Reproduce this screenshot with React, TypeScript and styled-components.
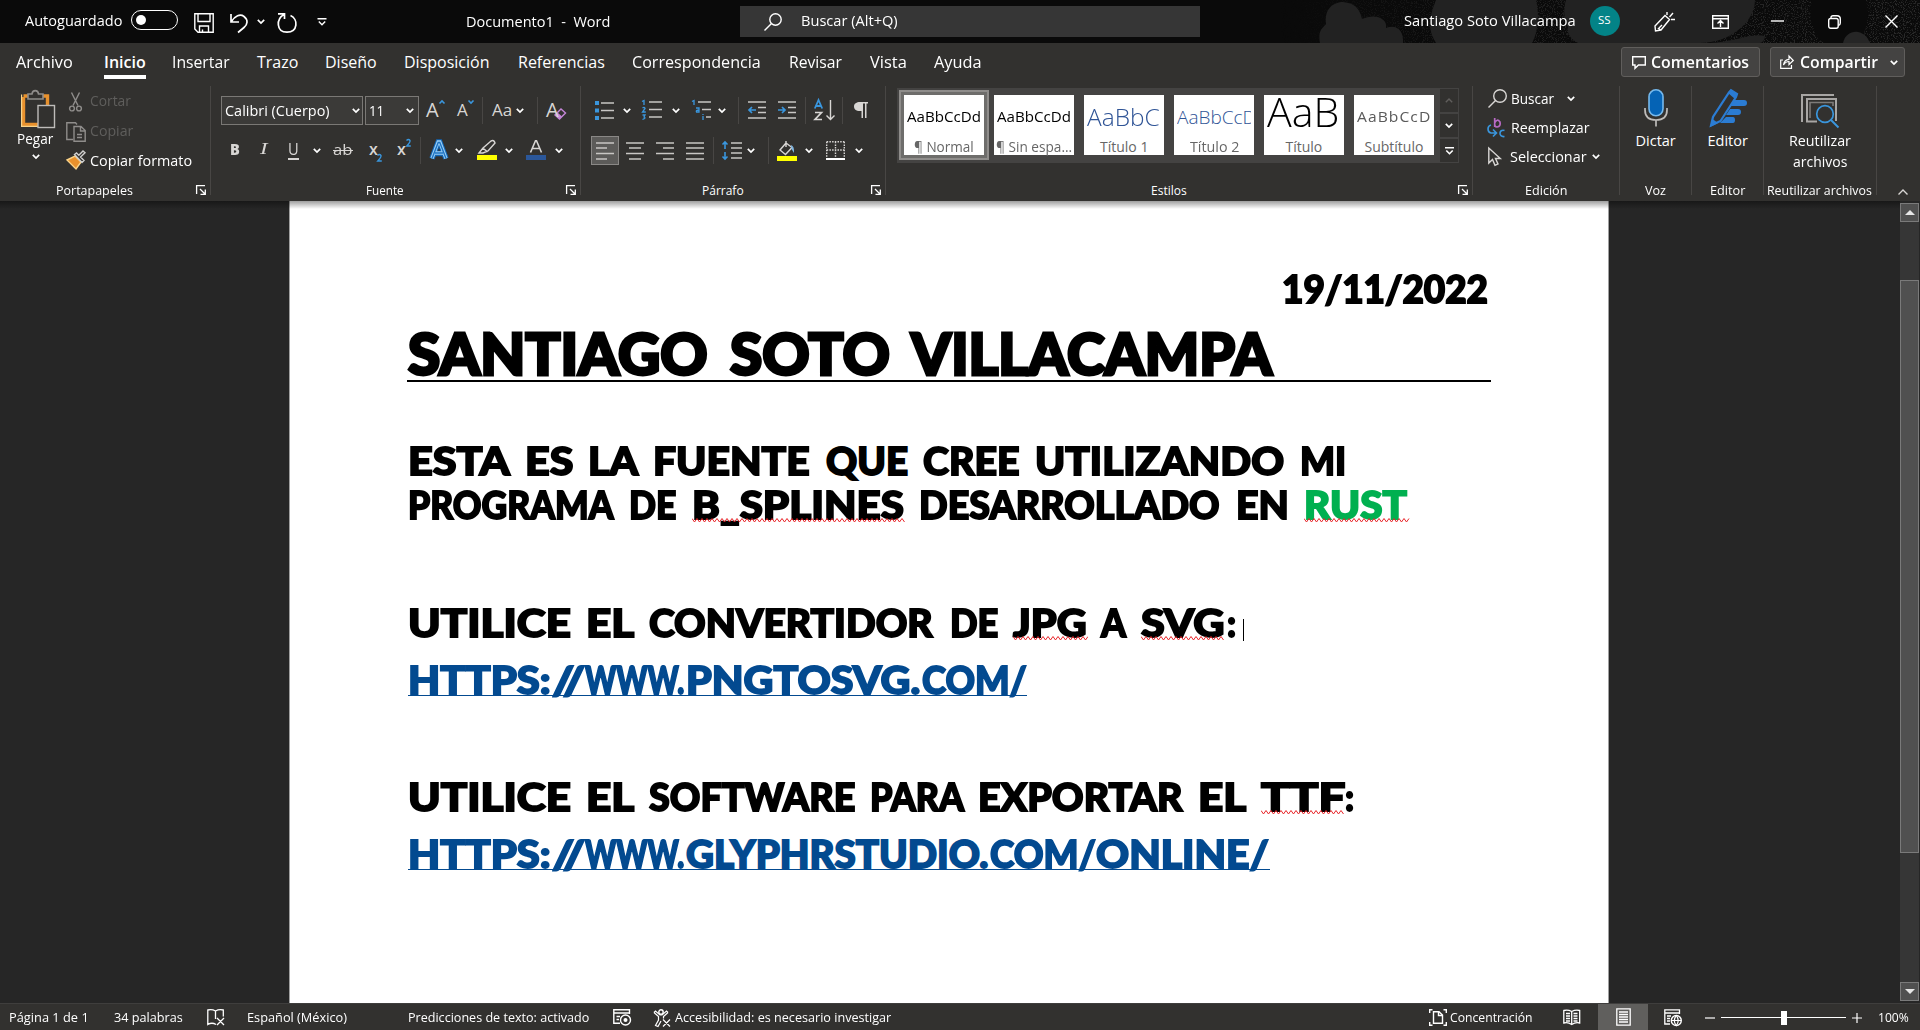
import React, { useLayoutEffect, useRef } from "react";
import styled, { createGlobalStyle, css } from "styled-components";

const GlobalStyle = createGlobalStyle`
  * { box-sizing: border-box; }
  html, body, #root { margin: 0; padding: 0; }
  body {
    background: #262626;
    color: #fff;
    font-family: "Open Sans", "Noto Sans", sans-serif;
    overflow: hidden;
  }
`;

/* ---------- shared parts ---------- */

const FitBox = styled.span<{ $w: number; $gap: number }>`
  display: block;
  flex: none;
  position: relative;
  width: ${(p) => p.$w}px;
  margin-left: ${(p) => p.$gap}px;
  white-space: nowrap;
`;

const FitText = styled.span<{ $size: number; $weight: number; $color: string; $family?: string; $lh?: number; $track?: number; $stroke?: number }>`
  display: inline-block;
  vertical-align: top;
  transform-origin: 0 50%;
  font-size: ${(p) => p.$size}px;
  font-weight: ${(p) => p.$weight};
  line-height: ${(p) => p.$lh ?? 20}px;
  letter-spacing: ${(p) => p.$track ?? 0}px;
  color: ${(p) => p.$color};
  ${(p) => p.$family && css`font-family: ${p.$family};`}
  ${(p) => p.$stroke && css`-webkit-text-stroke: ${p.$stroke}px ${p.$color};`}
`;

type TextProps = {
  w: number; gap?: number; size?: number; weight?: number; color?: string; stroke?: number;
  family?: string; lh?: number; track?: number; over?: React.ReactNode; children: React.ReactNode;
};

/* A run of text stretched or condensed to a fixed width. */
function Text({ w, gap = 0, size = 14, weight = 400, color = "#fff", stroke, family, lh, track, over, children }: TextProps) {
  const ref = useRef<HTMLSpanElement>(null);
  useLayoutEffect(() => {
    const el = ref.current;
    if (el && el.offsetWidth) el.style.transform = `scaleX(${w / el.offsetWidth})`;
  }, [w, children]);
  return (
    <FitBox $w={w} $gap={gap}>
      <FitText ref={ref} $size={size} $weight={weight} $color={color} $family={family} $lh={lh} $track={track} $stroke={stroke}>
        {children}
      </FitText>
      {over}
    </FitBox>
  );
}

const Svg = styled.svg<{ $gap?: number; $dy?: number }>`
  display: block;
  flex: none;
  margin-left: ${(p) => p.$gap ?? 0}px;
  margin-top: ${(p) => p.$dy ?? 0}px;
  overflow: visible;
  fill: none;
  stroke: #d0cfce;
  stroke-width: 1.4;
`;

type IconProps = { w: number; h: number; gap?: number; dy?: number; children: React.ReactNode };
const Icon = ({ w, h, gap, dy, children }: IconProps) => (
  <Svg width={w} height={h} viewBox={`0 0 ${w} ${h}`} $gap={gap} $dy={dy}>{children}</Svg>
);

const Chevron = ({ gap = 0, color = "#fff", dy }: { gap?: number; color?: string; dy?: number }) => (
  <Icon w={8} h={5} gap={gap} dy={dy}><path d="M.8 .8 4 4 7.2 .8" stroke={color} strokeWidth={1.7} /></Icon>
);

const Divider = styled.i<{ $gap: number; $h?: number }>`
  flex: none;
  width: 1px;
  height: ${(p) => p.$h ?? 27}px;
  margin-left: ${(p) => p.$gap}px;
  background: #484644;
`;

const Row = styled.div<{ $h: number; $mt?: number; $pl?: number }>`
  display: flex;
  align-items: center;
  height: ${(p) => p.$h}px;
  margin-top: ${(p) => p.$mt ?? 0}px;
  padding-left: ${(p) => p.$pl ?? 0}px;
`;

/* ---------- title bar ---------- */

const Window = styled.div`
  display: flex;
  flex-direction: column;
  width: 1920px;
  height: 1030px;
`;

const TitleBar = styled.header`
  position: relative;
  display: flex;
  flex: none;
  align-items: center;
  height: 43px;
  background: #0a0a0a;
  overflow: hidden;
  > * { position: relative; }
`;

const Backdrop = styled.svg`
  && { position: absolute; }
  right: 0;
  top: 0;
`;

const Toggle = styled.span`
  display: flex;
  flex: none;
  align-items: center;
  width: 47px;
  height: 20px;
  margin: -3px 0 0 8px;
  padding-left: 4px;
  border: 1.5px solid #fff;
  border-radius: 10px;
  &::before { content: ""; width: 10px; height: 10px; border-radius: 50%; background: #fff; }
`;

const SearchBox = styled.div`
  display: flex;
  flex: none;
  align-items: center;
  width: 460px;
  height: 31px;
  margin-left: 130px;
  padding-left: 24px;
  background: #363636;
`;

const Avatar = styled.div`
  display: flex;
  flex: none;
  align-items: center;
  justify-content: center;
  width: 30px;
  height: 30px;
  margin: -1px 0 0 14px;
  border-radius: 50%;
  background: #038387;
`;

function Title() {
  return (
    <TitleBar>
      <Backdrop width="640" height="43" viewBox="1280 0 640 43">
        <defs>
          <filter id="grain"><feTurbulence type="fractalNoise" baseFrequency="0.9" numOctaves="2" /><feColorMatrix values="0 0 0 0 .17  0 0 0 0 .17  0 0 0 0 .17  0 0 0 7 -3.6" /></filter>
          <linearGradient id="fade" x1="0" x2="1"><stop offset="0" stopColor="#000" /><stop offset=".35" stopColor="#666" /><stop offset="1" stopColor="#999" /></linearGradient>
          <mask id="m"><rect x="1280" width="640" height="43" fill="url(#fade)" /></mask>
        </defs>
        <g mask="url(#m)"><rect x="1280" width="640" height="43" filter="url(#grain)" opacity=".5" /></g>
        <g fill="#222">
          <path d="M1320 43C1318 30 1322 29 1326 24 1324 8 1334 2 1343 2 1356 3 1360 10 1362 19 1374 13 1388 18 1386 28 1397 24 1404 31 1403 43Z" />
          <path d="M1436 43C1428 30 1428 20 1436 0H1536C1539 12 1539 30 1532 43Z" />
          <path d="M1566 0C1563 10 1564 18 1568 27 1566 34 1572 40 1578 43H1700C1730 43 1755 22 1755 0Z" />
          <path d="M1702 43C1730 44 1752 32 1765 36 1765 40 1762 43 1760 43Z" />
        </g>
        <path d="M1812 0C1808 14 1812 34 1824 43H1858C1868 30 1870 14 1866 0Z" fill="#0a0a0a" />
        <path d="M1843 43C1845 34 1852 31 1858 32 1864 33 1868 38 1870 43Z" fill="#262626" />
      </Backdrop>
      <Text w={97.5} gap={25} lh={20}>Autoguardado</Text>
      <Toggle />
      <Icon w={20} h={20} gap={16} dy={3}><path d="M.8.8H19.2V19.2H4L.8 16ZM4 1V8.500H16V1M5.500 19V13H14.500V19M8.500 16.500V19" stroke="#fff" /></Icon>
      <Icon w={18} h={20} gap={16} dy={3}><path d="M1 1V9H9M1.500 8.500C5 3 10 .5 14 3.500 18.500 7 17.500 11.500 14 14.500L8 19.500" stroke="#fff" strokeWidth="1.7" /></Icon>
      <Chevron gap={9} />
      <Icon w={20} h={20} gap={12} dy={3}><path d="M1 .8H7.500V6M7 1.500C-1 6-1 19 10 19.200 21 19 21.500 6 13.500 2.500" stroke="#fff" strokeWidth="1.7" /></Icon>
      <Icon w={10} h={8} gap={20}><path d="M.5 .7H9.500M1.800 3.500 5 6.800 8.200 3.500" stroke="#fff" /></Icon>
      <Text w={144} gap={139.5} lh={24}>Documento1&nbsp; -&nbsp; Word</Text>
      <SearchBox>
        <Icon w={18} h={18}><circle cx="11.500" cy="6.500" r="5.700" stroke="#fff" /><path d="M7.500 10.500.500 17.500" stroke="#fff" /></Icon>
        <Text w={97} gap={19}>Buscar (Alt+Q)</Text>
      </SearchBox>
      <Text w={172} gap={203.500}>Santiago Soto Villacampa</Text>
      <Avatar><Text w={13} size={11.5}>SS</Text></Avatar>
      <Icon w={21} h={20} gap={34}><path d="M1 14 11 3.500 15.500 7.500 7 18 1.500 19ZM8 13 4.500 16.500 7 18M13 3V0M15.500 5 19 1M17 7.500H21" stroke="#fff" /></Icon>
      <Icon w={17} h={14} gap={37}><path d="M.7.7H16.300V13.300H.7ZM.7 3.700H16.300M8.500 12V6M5.500 8.500 8.500 5.500 11.500 8.500" stroke="#fff" /></Icon>
      <Icon w={13} h={2} gap={42} dy={-1}><path d="M0 1H13" stroke="#fff" /></Icon>
      <Icon w={13} h={14} gap={44}><rect x=".7" y="3.500" width="9.500" height="9.800" rx="2" stroke="#fff" /><path d="M3 3.500V2.500Q3 .7 5 .7H9Q12.300.7 12.300 4V8Q12.300 10 10.300 10.500" stroke="#fff" /></Icon>
      <Icon w={13} h={13} gap={44}><path d="M.5.5 12.500 12.500M12.500.5.5 12.500" stroke="#fff" /></Icon>
    </TitleBar>
  );
}

/* ---------- tabs ---------- */

const TabBar = styled.nav`
  display: flex;
  flex: none;
  height: 37px;
  background: #32312f;
`;

const Tab = styled.div<{ $gap: number; $active?: boolean }>`
  flex: none;
  height: 36px;
  margin-left: ${(p) => p.$gap}px;
  padding-top: 7px;
  border-bottom: 4px solid ${(p) => (p.$active ? "#fff" : "transparent")};
`;

const HeadButton = styled.button<{ $w: number; $gap: number; $pl: number }>`
  display: flex;
  flex: none;
  align-items: center;
  width: ${(p) => p.$w}px;
  height: 30px;
  margin: 4px 0 0 ${(p) => p.$gap}px;
  padding: 0 0 0 ${(p) => p.$pl}px;
  border: 1px solid #605e5c;
  border-radius: 3px;
  background: #444342;
  font: inherit;
`;

const tabs: [string, number, number][] = [
  ["Archivo", 16, 57], ["Inicio", 31, 42], ["Insertar", 26, 58], ["Trazo", 27, 41], ["Diseño", 27, 52],
  ["Disposición", 27, 86], ["Referencias", 28, 87], ["Correspondencia", 27, 129], ["Revisar", 28, 53],
  ["Vista", 28, 37], ["Ayuda", 27, 48],
];

function Tabs() {
  return (
    <TabBar>
      {tabs.map(([name, gap, w]) => (
        <Tab key={name} $gap={gap} $active={name === "Inicio"}>
          <Text w={w} size={16} lh={24} weight={name === "Inicio" ? 600 : 400}>{name}</Text>
        </Tab>
      ))}
      <HeadButton $w={139} $gap={639} $pl={10}>
        <Icon w={14} h={13}><path d="M.7.7H13.300V9H6.500L3 12.300V9H.7Z" stroke="#fff" /></Icon>
        <Text w={98} gap={5} size={16} lh={22} weight={600}>Comentarios</Text>
      </HeadButton>
      <HeadButton $w={135} $gap={10} $pl={9}>
        <Icon w={14} h={14}><path d="M3 5H.7V13.300H11.500V10M3.500 10C4 6 6 4.500 9 4.300V1L13.300 5.500 9 9.500V6.500C7 6.500 5 7.500 3.500 10Z" stroke="#fff" strokeWidth="1.200" /></Icon>
        <Text w={78} gap={6} size={16} lh={22} weight={600}>Compartir</Text>
        <Chevron gap={12} />
      </HeadButton>
    </TabBar>
  );
}

/* ---------- ribbon ---------- */

const RibbonBar = styled.section`
  display: flex;
  flex: none;
  height: 121px;
  padding: 6px 0;
  background: #32312f;
`;

const Group = styled.div<{ $w: number }>`
  display: flex;
  flex: none;
  flex-direction: column;
  width: ${(p) => p.$w}px;
  border-right: 1px solid #484644;
`;

const GroupBody = styled.div`
  flex: none;
  height: 99px;
`;

const GroupFoot = styled.div`
  display: flex;
  align-items: center;
  height: 10px;
`;

const LauncherBox = styled.span`
  margin-left: auto;
  margin-right: 4px;
`;

const FootLabel = styled.div`
  margin-top: 3px;
`;

const Columns = styled.div`
  display: flex;
`;

const BigButton = styled.div<{ $pt: number }>`
  display: flex;
  flex: 1;
  flex-direction: column;
  align-items: center;
  padding-top: ${(p) => p.$pt}px;
`;

const PasteButton = styled.div`
  display: flex;
  flex-direction: column;
  align-items: center;
  width: 37px;
  margin-left: 17px;
  padding-top: 4px;
`;

const Field = styled.div<{ $w: number; $gap?: number }>`
  display: flex;
  flex: none;
  align-items: center;
  width: ${(p) => p.$w}px;
  height: 29px;
  margin-left: ${(p) => p.$gap ?? 0}px;
  padding-left: 3px;
  border: 1px solid #7a7875;
  background: #3b3a38;
`;

const Pressed = styled.div`
  display: flex;
  flex: none;
  align-items: center;
  width: 28px;
  height: 29px;
  padding-left: 4px;
  border: 1px solid #8a8886;
  background: #5c5b59;
`;

const Launcher = () => (
  <LauncherBox>
    <Icon w={10} h={10}><path d="M.6 9V.6H9M4 4 8.500 8.500M9.300 4.500V9.300H4.500" stroke="#fff" strokeWidth="1.300" /></Icon>
  </LauncherBox>
);

function Foot({ w, gap, launcher, children }: { w: number; gap: number; launcher?: boolean; children: string }) {
  return (
    <GroupFoot>
      <FootLabel><Text w={w} gap={gap} size={12}>{children}</Text></FootLabel>
      {launcher && <Launcher />}
    </GroupFoot>
  );
}

const blue = "#3a96dd";

function Clipboard() {
  return (
    <Group $w={211}>
      <GroupBody>
        <Columns>
          <PasteButton>
            <Icon w={34} h={38} gap={4}>
              <path d="M2.500 7V34.500H17M26.500 15V6H20M2.500 6H8" stroke="#e8912d" strokeWidth="3.400" />
              <path d="M.6 4.500V36.400H17" stroke="#fad48a" strokeWidth="1.200" />
              <path d="M7 9V4H11C11.500-.5 17-.5 17.500 4H22V9Z" stroke="#8f8d8b" strokeWidth="1.600" fill="#32312f" />
              <rect x="17" y="15.500" width="16.500" height="22" stroke="#bebcba" fill="#32312f" />
            </Icon>
            <Text w={36.500} lh={22} size={14.500}>Pegar</Text>
            <Chevron dy={4} />
          </PasteButton>
          <div>
            <Row $h={30} $pl={15} $mt={1}>
              <Icon w={13} h={20} dy={-1}><path d="M2.500.5 9 13.500M10.500.5 4 13.500" stroke="#8f8d8b" /><circle cx="3" cy="16.500" r="2.400" stroke="#8f8d8b" /><circle cx="10" cy="16.500" r="2.400" stroke="#8f8d8b" /></Icon>
              <Text w={41} gap={8} size={14.5} color="#5f5e5c">Cortar</Text>
            </Row>
            <Row $h={30} $pl={12}>
              <Icon w={20} h={20} dy={-1}><path d="M7 17.500H.8V.8H9.500L11 2.500M8 4.500H15L19.200 8.500V19.200H8ZM14.500 4.500V9H19M11 12.500H16M11 15.500H16" stroke="#8f8d8b" /></Icon>
              <Text w={43} gap={4} size={14.5} color="#5f5e5c">Copiar</Text>
            </Row>
            <Row $h={30} $pl={12}>
              <Icon w={20} h={19} dy={-4}>
                <path d="M1 9 9 5 15 11 10 18Z" fill="#e8912d" stroke="#fad48a" />
                <path d="M8.500 3.500 16 11.500 18 9.500 14.500 6 19 1.800 17 0 12.800 4.200 10.500 2Z" stroke="#d0cfce" fill="#32312f" />
              </Icon>
              <Text w={102} gap={4} size={14.5}>Copiar formato</Text>
            </Row>
          </div>
        </Columns>
      </GroupBody>
      <Foot w={77} gap={56} launcher>Portapapeles</Foot>
    </Group>
  );
}

const g = "#d8d6d4";

function FontGroup() {
  return (
    <Group $w={370}>
      <GroupBody>
        <Row $h={28} $mt={10} $pl={10}>
          <Field $w={142}><Text w={105} size={15} lh={22}>Calibri (Cuerpo)</Text><Chevron gap={22} /></Field>
          <Field $w={54} $gap={2}><Text w={15} size={15} lh={22}>11</Text><Chevron gap={22} /></Field>
          <Text w={13} gap={7} size={20} color={g} lh={24}>A</Text>
          <Icon w={6} h={4} gap={0} dy={-16}><path d="M.5 3.500 3 1 5.500 3.500" stroke={blue} strokeWidth="1.600" /></Icon>
          <Text w={11} gap={12} size={17} color={g} lh={26}>A</Text>
          <Icon w={6} h={4} gap={0} dy={-16}><path d="M.5.5 3 3 5.500.5" stroke={blue} strokeWidth="1.600" /></Icon>
          <Divider $gap={8} />
          <Text w={20} gap={9} size={17} color={g} lh={22}>Aa</Text>
          <Chevron gap={4} />
          <Divider $gap={13} />
          <Text w={13} gap={8} size={20} color={g} lh={24}>A</Text>
          <Icon w={12} h={12} gap={-5} dy={8}><path d="M1 7 7 1 11.500 5 5.500 11Z" stroke="#c586d8" fill="#32312f" /><path d="M1 7 3.500 4.500 8 8.500 5.500 11Z" fill="#c586d8" stroke="none" /></Icon>
        </Row>
        <Row $h={28} $mt={12} $pl={19}>
          <Text w={10} size={16} weight={800} color={g}>B</Text>
          <Text w={8} gap={20} size={17} color={g} family='"Liberation Serif", serif'><i>I</i></Text>
          <Text w={11} gap={20} size={16} color={g} over={<Underbar />}>U</Text>
          <Chevron gap={14} />
          <Text w={20} gap={12} size={15} color={g} over={<Strike />}>ab</Text>
          <Text w={9} gap={16} size={16} weight={600} color={g}>x</Text>
          <Icon w={5} h={8} gap={-1} dy={16}><path d="M.5 1.500Q2.500-.5 4 1.500 4.500 3 .8 7H4.800" stroke={blue} /></Icon>
          <Text w={9} gap={15} size={16} weight={600} color={g}>x</Text>
          <Icon w={5} h={8} gap={0} dy={-14}><path d="M.5 1.500Q2.500-.5 4 1.500 4.500 3 .8 7H4.800" stroke={blue} /></Icon>
          <Divider $gap={9} />
          <Icon w={18} h={20} gap={9}>
            <path d="M2 18.500 8.200 2H9.800L16 18.500M4.500 13.500H13.500" stroke="#1267b8" strokeWidth="5.500" />
            <path d="M2 18.500 8.200 2H9.800L16 18.500M5 13H13" stroke="#9cd0f5" strokeWidth="3.400" />
            <path d="M2 18.500 8.200 2.500H9.800L16 18.500M5 13H13" stroke="#1f74c4" strokeWidth="1.400" />
          </Icon>
          <Chevron gap={7} />
          <Icon w={20} h={20} gap={14}><rect y="15" width="20" height="5" fill="#ff0" stroke="none" /><path d="M2 13 6 8 14 1Q17-.5 18 3L11 11 6 13ZM6 8 10.500 12" stroke={g} /></Icon>
          <Chevron gap={8} />
          <Icon w={20} h={20} gap={13}><rect y="15" width="20" height="5" fill="#2b579a" stroke="none" /><path d="M4.500 12.500 9.500.8H10.500L15.500 12.500M6.200 8.500H13.800" stroke={g} strokeWidth="1.600" /></Icon>
          <Chevron gap={9} />
        </Row>
      </GroupBody>
      <Foot w={38} gap={155} launcher>Fuente</Foot>
    </Group>
  );
}

const Underbar = styled.i`
  position: absolute; left: 0; right: 0; bottom: 1px; height: 2px; background: #d8d6d4;
`;
const Strike = styled.i`
  position: absolute; left: 0; right: 0; top: 11px; height: 1px; background: #d8d6d4;
`;

const L = ({ d }: { d: string }) => <path d={d} stroke="#c8c6c4" strokeWidth="1.600" />;

function Paragraph() {
  return (
    <Group $w={305}>
      <GroupBody>
        <Row $h={28} $mt={10} $pl={14}>
          <Icon w={19} h={19}><path d="M0 2H4M0 9.500H4M0 17H4" stroke={blue} strokeWidth="4" /><L d="M6 2H19M6 9.500H19M6 17H19" /></Icon>
          <Chevron gap={9} />
          <Icon w={20} h={20} gap={11}><L d="M7 2H20M7 9.500H20M7 17H20" /><path d="M0 1.500 2 .5V5M.5 8Q2.500 6.500 3 8.500L.5 12H3.800M.5 15H3L2 17Q4.500 18 .5 19.500" stroke={blue} strokeWidth="1.300" /></Icon>
          <Chevron gap={10} />
          <Icon w={19} h={20} gap={12}><L d="M6 2H19M10 9.500H19M14 17H19" /><path d="M0 1.500 2 .5V5M4 8H7V12H4.500Q3.500 10 7 10M11 14V15M11 16V20" stroke={blue} strokeWidth="1.300" /></Icon>
          <Chevron gap={7} />
          <Divider $gap={12} />
          <Icon w={18} h={18} gap={9}><L d="M0 1H18M10 6.500H18M10 11.500H18M0 17H18" /><path d="M8 9H1M4 6 1 9 4 12" stroke={blue} strokeWidth="1.700" /></Icon>
          <Icon w={18} h={18} gap={12}><L d="M0 1H18M10 6.500H18M10 11.500H18M0 17H18" /><path d="M0 9H7M4 6 7 9 4 12" stroke={blue} strokeWidth="1.700" /></Icon>
          <Divider $gap={9} />
          <Icon w={21} h={22} gap={8}><path d="M.8 9.500 4.500 1 8.200 9.500M2 7H7" stroke={blue} strokeWidth="1.800" /><path d="M1 13.500H7.500L1 20.500H8" stroke={g} strokeWidth="1.700" /><path d="M16.500 1V20M12.500 16.500 16.500 20.500 20.500 16.500" stroke={g} /></Icon>
          <Divider $gap={7} />
          <Icon w={14} h={16} gap={11}><path d="M6 0H14V1.500H12.500V16H11V1.500H9V16H7.500V9C2 9.500 0 7 0 4.500 0 1.500 2.500 0 6 0Z" fill={g} stroke="none" /></Icon>
        </Row>
        <Row $h={29} $mt={12} $pl={10}>
          <Pressed><Icon w={18} h={18}><L d="M0 1H18M0 6H11M0 11.500H18M0 17H11" /></Icon></Pressed>
          <Icon w={18} h={18} gap={7}><L d="M0 1H18M3 6H15M0 11.500H18M3 17H15" /></Icon>
          <Icon w={18} h={18} gap={12}><L d="M0 1H18M7 6H18M0 11.500H18M7 17H18" /></Icon>
          <Icon w={18} h={18} gap={12}><L d="M0 1H18M0 6H18M0 11.500H18M0 17H18" /></Icon>
          <Divider $gap={9} />
          <Icon w={20} h={20} gap={8}><L d="M9 2H20M9 7H20M9 12H20M9 17H20" /><path d="M3 1V8M.5 3.500 3 1 5.500 3.500M3 11V18M.5 15.500 3 18 5.500 15.500" stroke={blue} strokeWidth="1.600" /></Icon>
          <Chevron gap={5} />
          <Divider $gap={13} />
          <Icon w={20} h={20} gap={8}><rect y="15" width="20" height="5" fill="#ff0" stroke="none" /><path d="M9 2 3 9 8.500 13.500 15 6.500 9 2V0M9 2V6" stroke={g} /><path d="M14 4Q17.500 5 17 12L14.500 8Z" fill="#7fb5e0" stroke="none" /></Icon>
          <Chevron gap={8} />
          <Icon w={19} h={19} gap={13}><path d="M.7.7H18.300M.7.7V17M18.300.7V17M9.500.7V17M.7 9H18.300" stroke={g} strokeDasharray="1.500 1.200" /><path d="M0 18H19" stroke="#fff" strokeWidth="2" /></Icon>
          <Chevron gap={10} />
        </Row>
      </GroupBody>
      <Foot w={42} gap={121} launcher>Párrafo</Foot>
    </Group>
  );
}

/* ---------- style gallery ---------- */

const Gallery = styled.div`
  display: flex;
  width: 562px;
  height: 75px;
  margin: 2px 0 0 11px;
  padding: 2px 1px 1px 2px;
  background: #444342;
`;

const StyleCell = styled.div<{ $on?: boolean }>`
  flex: none;
  width: 90px;
  height: 70px;
  padding: 3px;
  border: 2px solid ${(p) => (p.$on ? "#8f8d8b" : "transparent")};
  background: ${(p) => (p.$on ? "#6e6d6b" : "transparent")};
`;

const Thumb = styled.div`
  display: flex;
  flex-direction: column;
  width: 80px;
  height: 60px;
  background: #fff;
`;

const Sample = styled.div<{ $up?: number }>`
  display: flex;
  flex: none;
  align-items: center;
  height: 37px;
  margin: 3px 3px 0;
  padding-bottom: ${(p) => p.$up ?? 0}px;
  overflow: hidden;
`;

const ThumbName = styled.div`
  display: flex;
  justify-content: center;
  margin-top: 2px;
`;

const Scroller = styled.div`
  display: flex;
  flex-direction: column;
  justify-content: space-between;
  width: 18px;
  height: 73px;
  margin: -1px 0 0 auto;
`;

const ScrollKey = styled.div`
  display: flex;
  align-items: center;
  justify-content: center;
  height: 23px;
  background: #32312f;
`;

type StyleDef = { name: string; nw: number; s: string; sw: number; size: number; color: string; light?: boolean; up?: number; track?: number };
const styleDefs: StyleDef[] = [
  { name: "¶ Normal", nw: 60, s: "AaBbCcDd", sw: 74, size: 14.5, color: "#000" },
  { name: "¶ Sin espa...", nw: 76, s: "AaBbCcDd", sw: 74, size: 14.5, color: "#000" },
  { name: "Título 1", nw: 48, s: "AaBbCc", sw: 84, size: 23, color: "#2f5496", light: true },
  { name: "Título 2", nw: 49, s: "AaBbCcD", sw: 79, size: 19, color: "#2f5496", light: true },
  { name: "Título", nw: 37, s: "AaB", sw: 72, size: 40, color: "#000", light: true, up: 10 },
  { name: "Subtítulo", nw: 59, s: "AaBbCcDd", sw: 85, size: 14.5, color: "#5a5a5a", track: 1 },
];

function Styles() {
  return (
    <Group $w={587}>
      <GroupBody>
        <Gallery>
          {styleDefs.map((d, i) => (
            <StyleCell key={d.name} $on={i === 0}>
              <Thumb>
                <Sample $up={d.up}>
                  <Text w={d.sw} size={d.size} color={d.color} weight={d.light ? 300 : 400} track={d.track} lh={36}>{d.s}</Text>
                </Sample>
                <ThumbName><Text w={d.nw} size={14} color="#666">{d.name}</Text></ThumbName>
              </Thumb>
            </StyleCell>
          ))}
          <Scroller>
            <ScrollKey><Icon w={8} h={5}><path d="M.8 4.200 4 1 7.200 4.200" stroke="#605e5c" /></Icon></ScrollKey>
            <ScrollKey><Chevron /></ScrollKey>
            <ScrollKey><Icon w={9} h={8}><path d="M0 .8H9M1.300 3.500 4.500 6.700 7.700 3.500" stroke="#fff" strokeWidth="1.600" /></Icon></ScrollKey>
          </Scroller>
        </Gallery>
      </GroupBody>
      <Foot w={36} gap={265} launcher>Estilos</Foot>
    </Group>
  );
}

function Editing() {
  return (
    <Group $w={147}>
      <GroupBody>
        <Row $h={29} $mt={-1} $pl={15}>
          <Icon w={19} h={19} dy={-2}><circle cx="12" cy="7" r="6.300" stroke={g} /><path d="M7.500 11.500.5 18.500" stroke={g} /></Icon>
          <Text w={43} gap={4} size={14.5}>Buscar</Text>
          <Chevron gap={13} dy={-2} />
        </Row>
        <Row $h={29} $pl={14}>
          <Icon w={18} h={20} dy={-2}>
            <path d="M7.700 0V9M7.700 5Q10-.0 13 4 14 8.500 10 9 8.500 9 7.700 7.500" stroke="#b86ac5" strokeWidth="1.700" />
            <path d="M17.500 12.500C12 10.500 11 19.500 17.500 18.500M4 7C0 8 0 14 4 15H9M6 11.500 9.500 15 6 18.500" stroke={blue} strokeWidth="1.600" />
          </Icon>
          <Text w={78.500} gap={6} size={14.5}>Reemplazar</Text>
        </Row>
        <Row $h={29} $pl={15}>
          <Icon w={13} h={19} dy={-2}><path d="M.8 1V16L4.500 12.500 7 18.300 10 17 7.500 11.500H12.300Z" stroke={g} /></Icon>
          <Text w={76.500} gap={9} size={14.5}>Seleccionar</Text>
          <Chevron gap={5} dy={-2} />
        </Row>
      </GroupBody>
      <Foot w={42} gap={52}>Edición</Foot>
    </Group>
  );
}

const Collapse = styled.div`
  margin: auto 12px 0 auto;
  height: 6px;
`;

function Ribbon() {
  return (
    <RibbonBar>
      <Clipboard />
      <FontGroup />
      <Paragraph />
      <Styles />
      <Editing />
      <Group $w={72}>
        <GroupBody>
          <BigButton $pt={3}>
            <Icon w={24} h={38}><path d="M1 19V21Q1 31 12 31 23 31 23 21V19M12 31V37.500" stroke="#bebcba" strokeWidth="1.700" /><rect x="5" y=".8" width="14" height="26" rx="7" fill="#0563b5" stroke="#76b9ed" strokeWidth="1.600" /></Icon>
            <Text w={40} lh={28} size={14.5}>Dictar</Text>
          </BigButton>
        </GroupBody>
        <Foot w={21} gap={25}>Voz</Foot>
      </Group>
      <Group $w={72}>
        <GroupBody>
          <BigButton $pt={3}>
            <Icon w={38} h={38}>
              <path d="M25 11H35Q38 11 38 14 38 17 35 17H21ZM21 20H29Q32 20 32 23 32 26 29 26H17ZM17 28H24Q26 28 26 31 26 34 24 34H11Z" fill="#2b7cd3" stroke="none" />
              <path d="M2 36.500 4 28 20 3.500 22 1.200 28 5 27 8 11.500 32Z" stroke="#2b7cd3" strokeWidth="2.200" fill="#32312f" />
              <path d="M19 4 22 1 28.500 5 26 10ZM1 38 3.500 30 9 34Z" fill="#2b7cd3" stroke="none" />
            </Icon>
            <Text w={40} lh={28} size={14.5}>Editor</Text>
          </BigButton>
        </GroupBody>
        <Foot w={35} gap={18}>Editor</Foot>
      </Group>
      <Group $w={113}>
        <GroupBody>
          <BigButton $pt={8}>
            <Icon w={38} h={34}>
              <path d="M1 28V1H33M16 27.500H6V5H35V27" stroke="#a8a6a4" strokeWidth="2" />
              <path d="M9 24V8.500H32V12" stroke="#7d7b79" strokeWidth="1.600" />
              <circle cx="24" cy="20" r="8.300" stroke={blue} strokeWidth="1.700" fill="#32312f" /><path d="M30 26 37.500 33.500" stroke={blue} strokeWidth="1.900" />
            </Icon>
            <Text w={62} lh={26} size={14.5}>Reutilizar</Text>
            <Text w={54} lh={15} size={14.5}>archivos</Text>
          </BigButton>
        </GroupBody>
        <Foot w={105} gap={3}>Reutilizar archivos</Foot>
      </Group>
      <Collapse><Icon w={10} h={6}><path d="M.5 5.500 5 1 9.500 5.500" stroke={g} /></Icon></Collapse>
    </RibbonBar>
  );
}

/* ---------- document ---------- */

const Workspace = styled.main`
  position: relative;
  display: flex;
  flex: none;
  height: 802px;
  background: #262626;
`;

const TopShade = styled.div`
  position: absolute;
  inset: 0 20px auto 0;
  height: 8px;
  background: linear-gradient(rgba(0, 0, 0, .38), rgba(0, 0, 0, 0));
`;

const Sheet = styled.article`
  width: 1320px;
  margin-left: 289px;
  padding-top: 65px;
  background: #fff;
  border-left: 1px solid #a0a0a0;
  border-right: 1px solid #a0a0a0;
`;

const Line = styled.div<{ $mt?: number; $h?: number; $ml?: number }>`
  display: flex;
  height: ${(p) => p.$h ?? 44}px;
  margin: ${(p) => p.$mt ?? 0}px 0 0 ${(p) => p.$ml ?? 118}px;
`;

const Rule = styled.hr`
  width: 1084px;
  height: 2px;
  margin: 0 0 0 117px;
  border: 0;
  background: #000;
`;

const Link = styled.div<{ $w: number }>`
  position: relative;
  display: flex;
  width: ${(p) => p.$w}px;
  &::after { content: ""; position: absolute; left: 0; right: 0; top: 38px; height: 1px; background: #034a90; }
`;

const Caret = styled.i`
  flex: none;
  width: 1px;
  height: 22px;
  margin: 19px 0 0 7px;
  background: #000;
`;

const WaveSvg = styled.svg`
  position: absolute;
  left: 0;
  top: 36px;
`;

const Wave = ({ w }: { w: number }) => {
  const points = Array.from({ length: Math.floor(w / 2.5) + 1 }, (_, i) => `${i * 2.5},${i % 2 ? 4 : 0.5}`).join(" ");
  return <WaveSvg width={w} height={5}><polyline points={points} fill="none" stroke="#e8262b" strokeWidth={1} /></WaveSvg>;
};

type WordProps = { w: number; gap?: number; children: string; color?: string; size?: number; wave?: number; lh?: number };
const Word = ({ size = 38.5, color = "#000", wave, lh = 44, ...rest }: WordProps) => (
  <Text
    {...rest} size={size} color={color} lh={lh} weight={900} stroke={size > 50 ? 3 : 1.8}
    family='"Lato Black", Lato, sans-serif' over={wave ? <Wave w={wave} /> : undefined}
  />
);

const ink = "#034a90";

function Document() {
  return (
    <Workspace>
      <Sheet>
        <Line $h={44} $ml={992}><Word w={206}>19/11/2022</Word></Line>
        <Line $mt={11} $h={59}>
          <Word size={57} lh={65} w={300}>SANTIAGO</Word>
          <Word size={57} lh={65} gap={22} w={160}>SOTO</Word>
          <Word size={57} lh={65} gap={21} w={361}>VILLACAMPA</Word>
        </Line>
        <Rule />
        <Line $mt={56}>
          <Word w={102}>ESTA</Word><Word gap={15} w={48}>ES</Word><Word gap={15} w={50}>LA</Word>
          <Word gap={15} w={157}>FUENTE</Word><Word gap={16} w={82}>QUE</Word><Word gap={15} w={97}>CREE</Word>
          <Word gap={15} w={249}>UTILIZANDO</Word><Word gap={16} w={46}>MI</Word>
        </Line>
        <Line>
          <Word w={206}>PROGRAMA</Word><Word gap={15} w={47}>DE</Word><Word gap={16} w={212} wave={213}>B_SPLINES</Word>
          <Word gap={15} w={301}>DESARROLLADO</Word><Word gap={16} w={53}>EN</Word>
          <Word gap={15} w={103} wave={106} color="#00b050">RUST</Word>
        </Line>
        <Line $mt={74}>
          <Word w={163}>UTILICE</Word><Word gap={15} w={48}>EL</Word><Word gap={15} w={284}>CONVERTIDOR</Word>
          <Word gap={17} w={48}>DE</Word><Word gap={15} w={74} wave={75}>JPG</Word><Word gap={14} w={25}>A</Word>
          <Word gap={15} w={84} wave={84}>SVG</Word><Word gap={2} w={9}>:</Word><Caret />
        </Line>
        <Line $mt={13}>
          <Link $w={619}>
            <Word color={ink} w={143}>HTTPS:</Word><Word color={ink} gap={1} w={33}>//</Word>
            <Word color={ink} gap={0} w={99}>WWW.</Word><Word color={ink} gap={2} w={234}>PNGTOSVG.</Word>
            <Word color={ink} gap={2} w={105}>COM/</Word>
          </Link>
        </Line>
        <Line $mt={73}>
          <Word w={163}>UTILICE</Word><Word gap={15} w={48}>EL</Word><Word gap={15} w={206}>SOFTWARE</Word>
          <Word gap={15} w={94}>PARA</Word><Word gap={14} w={205}>EXPORTAR</Word><Word gap={15} w={48}>EL</Word>
          <Word gap={15} w={84} wave={84}>TTF</Word><Word w={9}>:</Word>
        </Line>
        <Line $mt={13}>
          <Link $w={862}>
            <Word color={ink} w={143}>HTTPS:</Word><Word color={ink} gap={1} w={33}>//</Word>
            <Word color={ink} gap={0} w={99}>WWW.</Word><Word color={ink} gap={2} w={302}>GLYPHRSTUDIO.</Word>
            <Word color={ink} gap={2} w={106}>COM/</Word><Word color={ink} w={173}>ONLINE/</Word>
          </Link>
        </Line>
      </Sheet>
      <TopShade />
      <Scrollbar>
        <ScrollEnd><Icon w={10} h={5}><path d="M0 5 5 0 10 5Z" fill="#e6e6e6" stroke="none" /></Icon></ScrollEnd>
        <ScrollThumb />
        <ScrollEnd><Icon w={10} h={5}><path d="M0 0 5 5 10 0Z" fill="#e6e6e6" stroke="none" /></Icon></ScrollEnd>
      </Scrollbar>
    </Workspace>
  );
}

const Scrollbar = styled.aside`
  display: flex;
  flex-direction: column;
  justify-content: space-between;
  width: 19px;
  margin: 2px 1px 2px auto;
  background: #363636;
`;

const ScrollEnd = styled.div`
  display: flex;
  align-items: center;
  justify-content: center;
  height: 19px;
  border: 1px solid #7a7a7a;
  background: #505050;
`;

const ScrollThumb = styled.div`
  height: 573px;
  margin: 58px 0 auto;
  border: 1px solid #7a7a7a;
  background: #505050;
`;

/* ---------- status bar ---------- */

const StatusBar = styled.footer`
  display: flex;
  align-items: center;
  height: 27px;
  border-top: 1px solid #3f3e3d;
  background: #32312f;
  padding-top: 3px;
`;

const ViewOn = styled.div`
  display: flex;
  flex: none;
  align-items: center;
  justify-content: center;
  width: 50px;
  height: 26px;
  margin: -3px 0 0 17px;
  background: #605f5d;
`;

const Slider = styled.div`
  display: flex;
  flex: none;
  justify-content: center;
  align-items: center;
  width: 125px;
  height: 14px;
  margin: -2px 0 0 6px;
  background: linear-gradient(#fff, #fff) 0 50% / 100% 1px no-repeat;
  &::before { content: ""; width: 6px; height: 14px; background: #fff; }
`;

function Status() {
  const s = 12.5;
  return (
    <StatusBar>
      <Text w={80} gap={8.500} size={s}>Página 1 de 1</Text>
      <Text w={69} gap={25.500} size={s}>34 palabras</Text>
      <Icon w={18} h={17} gap={24} dy={-2}><path d="M9 15.500Q5 13 .8 15.500V1Q5 0 8.500 2 12 0 16.300 1V7.500M8.500 2V10M10 9 17 16M17 9 10 16" stroke="#fff" strokeWidth="1.300" /></Icon>
      <Text w={100} gap={22} size={s}>Español (México)</Text>
      <Text w={181} gap={61} size={s}>Predicciones de texto: activado</Text>
      <Icon w={18} h={17} gap={24} dy={-2}><path d="M7 14.300H.8V.8H16.500V5M.8 4H16.500M3.500 7.500H7M3.500 10.500H6" stroke="#fff" /><circle cx="12.500" cy="11" r="5" stroke="#fff" /><circle cx="12.500" cy="11" r="2" fill="#fff" stroke="none" /></Icon>
      <Icon w={18} h={18} gap={22} dy={-2}><circle cx="8" cy="3" r="2.200" stroke="#fff" /><path d="M1 3.500 5.500 7.500V11L2.500 16.500 5 17.500 8 12M15 3.500 10.500 7.500V9.500M1 3.500 2.500 2 7 6H9L13.500 2 15 3.500M10 10.500 17 17.500M17 10.500 10 17.500" stroke="#fff" strokeWidth="1.200" /></Icon>
      <Text w={216} gap={4} size={s}>Accesibilidad: es necesario investigar</Text>
      <Icon w={18} h={17} gap={538} dy={-2}><path d="M3.500.7H.7V4M14.500.7H17.300V4M3.500 16.300H.7V13M14.500 16.300H17.300V13M4.500 2.700H10L13.500 6V14.300H4.500ZM9.500 3V6.500H13" stroke="#fff" /></Icon>
      <Text w={83} gap={3} size={s}>Concentración</Text>
      <Icon w={18} h={17} gap={30} dy={-2}><path d="M8.700 2.500Q5 .5.8 1.500V14Q5 13 8.700 15.500 12.500 13 16.700 14V1.500Q12.500.5 8.700 2.500ZV16M3 4.500H7M3 7H7M3 9.500H7M3 12H7M10.500 4.500H14.500M10.500 7H14.500M10.500 9.500H14.500M10.500 12H14.500" stroke="#fff" strokeWidth="1.300" /></Icon>
      <ViewOn><Icon w={15} h={18}><path d="M.8.8H14.200V17.200H.8ZM3 4H12M3 6.500H12M3 9H12M3 11.500H12M3 14H12" stroke="#fff" strokeWidth="1.300" /></Icon></ViewOn>
      <Icon w={18} h={17} gap={16} dy={-2}><path d="M6 15H.8V.8H15.500V5M.8 4H15.500M3 7H7M3 9.500H6M3 12H6" stroke="#fff" strokeWidth="1.300" /><circle cx="12.300" cy="11.500" r="5" stroke="#fff" /><path d="M7.500 11.500H17M12.300 6.500C9.500 10 9.500 13 12.300 16.500 15 13 15 10 12.300 6.500" stroke="#fff" strokeWidth="1.200" /></Icon>
      <Icon w={10} h={10} gap={23} dy={-2}><path d="M0 5H10" stroke="#fff" strokeWidth="1.200" /></Icon>
      <Slider />
      <Icon w={10} h={10} gap={6} dy={-2}><path d="M0 5H10M5 0V10" stroke="#fff" strokeWidth="1.200" /></Icon>
      <Text w={31} gap={16} size={s}>100%</Text>
    </StatusBar>
  );
}

export default function App() {
  return (
    <Window>
      <GlobalStyle />
      <Title />
      <Tabs />
      <Ribbon />
      <Document />
      <Status />
    </Window>
  );
}
